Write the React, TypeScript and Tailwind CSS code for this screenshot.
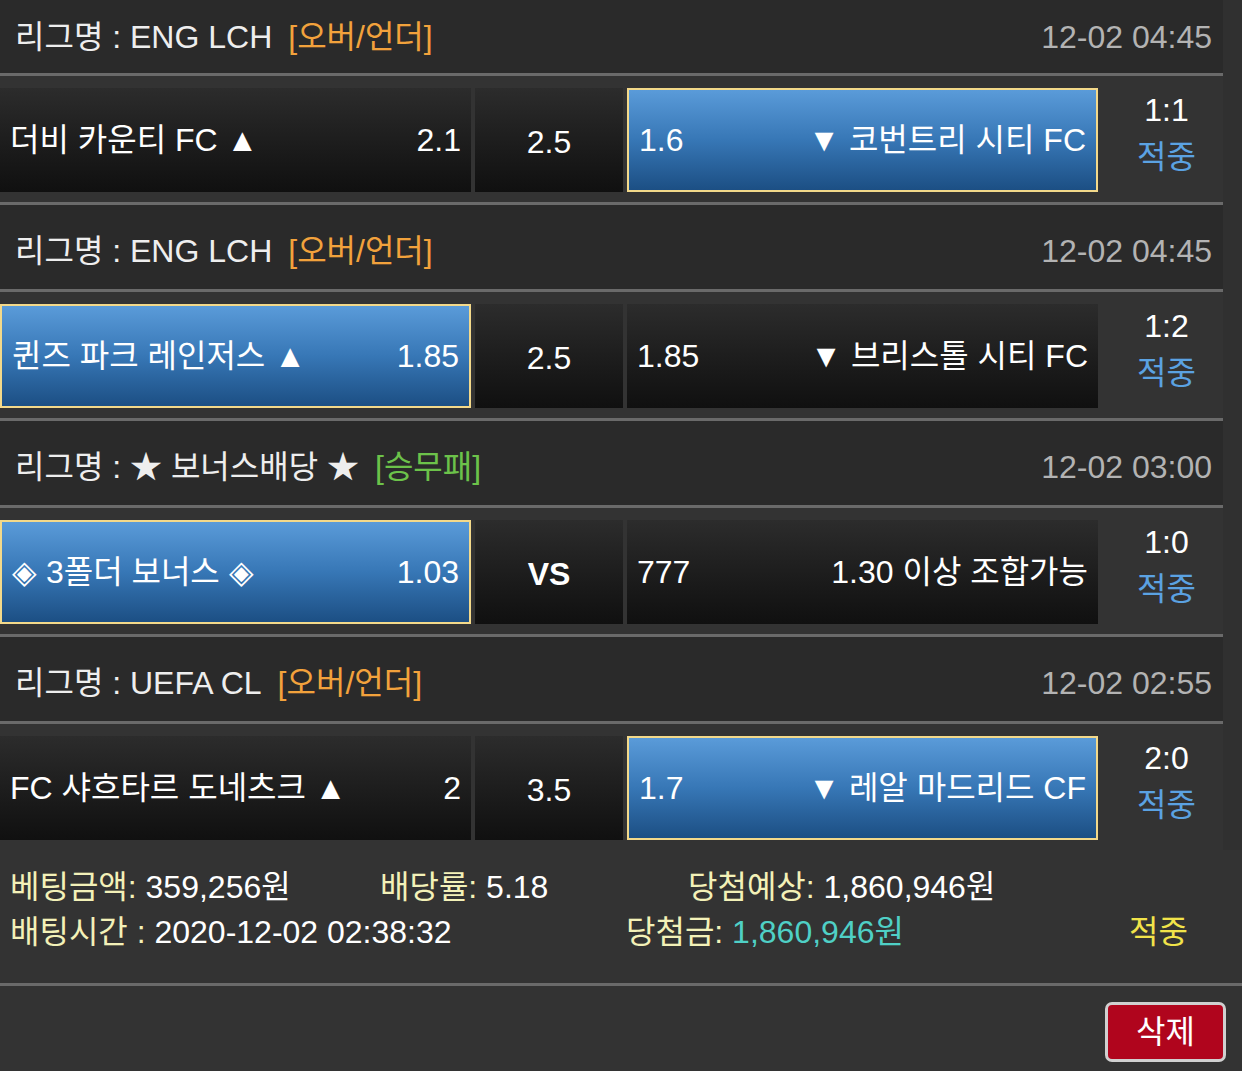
import React from "react";

type Side = { text: React.ReactNode; odd: string; sel?: boolean };
type Match = {
  league: string;
  tag: string;
  tagColor: string;
  time: string;
  home: Side;
  mid: string;
  midBold?: boolean;
  away: Side;
  score: string;
};

const matches: Match[] = [
  {
    league: "리그명 : ENG LCH",
    tag: "[오버/언더]",
    tagColor: "text-[#f2a23c]",
    time: "12-02 04:45",
    home: { text: "더비 카운티 FC ▲", odd: "2.1" },
    mid: "2.5",
    away: { text: "▼ 코번트리 시티 FC", odd: "1.6", sel: true },
    score: "1:1",
  },
  {
    league: "리그명 : ENG LCH",
    tag: "[오버/언더]",
    tagColor: "text-[#f2a23c]",
    time: "12-02 04:45",
    home: { text: "퀸즈 파크 레인저스 ▲", odd: "1.85", sel: true },
    mid: "2.5",
    away: { text: "▼ 브리스톨 시티 FC", odd: "1.85" },
    score: "1:2",
  },
  {
    league: "리그명 : ★ 보너스배당 ★",
    tag: "[승무패]",
    tagColor: "text-[#6cc24a]",
    time: "12-02 03:00",
    home: { text: "◈ 3폴더 보너스 ◈", odd: "1.03", sel: true },
    mid: "VS",
    midBold: true,
    away: { text: "1.30 이상 조합가능", odd: "777" },
    score: "1:0",
  },
  {
    league: "리그명 : UEFA CL",
    tag: "[오버/언더]",
    tagColor: "text-[#f2a23c]",
    time: "12-02 02:55",
    home: { text: "FC 샤흐타르 도네츠크 ▲", odd: "2" },
    mid: "3.5",
    away: { text: "▼ 레알 마드리드 CF", odd: "1.7", sel: true },
    score: "2:0",
  },
];

function Cell({ side, away }: { side: Side; away?: boolean }) {
  const base = "w-[471px] h-[104px] flex items-center justify-between text-white px-[10px]";
  const bg = side.sel
    ? "bg-gradient-to-b from-[#5a9bd9] via-[#3777b6] to-[#1c4f84] border-2 border-[#f3d98a]"
    : "bg-gradient-to-b from-[#2c2c2c] to-[#101010]";
  return (
    <div className={`${base} ${bg}`}>
      {away ? (
        <>
          <span>{side.odd}</span>
          <span>{side.text}</span>
        </>
      ) : (
        <>
          <span>{side.text}</span>
          <span>{side.odd}</span>
        </>
      )}
    </div>
  );
}

function Block({ m, first, last }: { m: Match; first: boolean; last: boolean }) {
  return (
    <div className="flex flex-col">
      <div
        className={`${first ? "h-[73px] pt-0" : "h-[84px] pt-[8px]"} bg-[#2a2a2a] flex items-center justify-between pl-[15px] pr-[11px]`}
      >
        <div className="flex items-center">
          <span className="text-[#eeeeee]">{m.league}</span>
          <span className={`${m.tagColor} ml-[16px]`}>{m.tag}</span>
        </div>
        <span className="text-[#b3b3b3]">{m.time}</span>
      </div>
      <div className="h-[3px] bg-[#6a6a6a]" />
      <div className="h-[126px] pt-[12px] flex">
        <Cell side={m.home} />
        <div className="w-[4px]" />
        <div
          className={`w-[148px] h-[104px] flex items-center justify-center pt-[4px] text-white bg-gradient-to-b from-[#2c2c2c] to-[#101010] ${m.midBold ? "font-bold" : ""}`}
        >
          {m.mid}
        </div>
        <div className="w-[4px]" />
        <Cell side={m.away} away />
        <div className="w-[125px] h-[104px] flex flex-col items-center justify-center pl-[12px] leading-[47px] -mt-[6px]">
          <span className="text-white">{m.score}</span>
          <span className="text-[#5ba2e2]">적중</span>
        </div>
      </div>
      {!last && <div className="h-[3px] bg-[#6a6a6a]" />}
    </div>
  );
}

export default function App() {
  return (
    <div className="w-[1242px] h-[1071px] overflow-hidden bg-[#333333] text-[32px] leading-none font-['Liberation_Sans','Noto_Sans_CJK_KR',sans-serif]">
      <div className="flex">
        <div className="w-[1223px] flex flex-col">
          {matches.map((m, i) => (
            <Block key={i} m={m} first={i === 0} last={i === matches.length - 1} />
          ))}
        </div>
        <div className="w-[19px] bg-[#303030]" />
      </div>
      <div className="h-[143px] -mt-[10px] pt-[30px] pl-[10px] pr-[12px] flex flex-col gap-[11px]">
        <div className="flex h-[34px] items-center">
          <span className="w-[370px]">
            <span className="text-[#f3f1b8]">베팅금액:</span>
            <span className="text-white"> 359,256원</span>
          </span>
          <span className="w-[308px]">
            <span className="text-[#f3f1b8]">배당률:</span>
            <span className="text-white"> 5.18</span>
          </span>
          <span>
            <span className="text-[#f3f1b8]">당첨예상:</span>
            <span className="text-white"> 1,860,946원</span>
          </span>
        </div>
        <div className="flex h-[34px] items-center">
          <span className="w-[616px]">
            <span className="text-[#f3f1b8]">배팅시간 :</span>
            <span className="text-white"> 2020-12-02 02:38:32</span>
          </span>
          <span className="w-[503px]">
            <span className="text-[#f3f1b8]">당첨금:</span>
            <span className="text-[#4fd0c6]"> 1,860,946원</span>
          </span>
          <span className="text-[#f1e34a]">적중</span>
        </div>
      </div>
      <div className="h-[3px] bg-[#6a6a6a]" />
      <div className="flex justify-end pr-[16px] pt-[16px]">
        <button className="w-[121px] h-[60px] rounded-[7px] border-[3px] border-[#d0d0d0] bg-[#b0051d] text-white flex items-center justify-center">
          삭제
        </button>
      </div>
    </div>
  );
}
